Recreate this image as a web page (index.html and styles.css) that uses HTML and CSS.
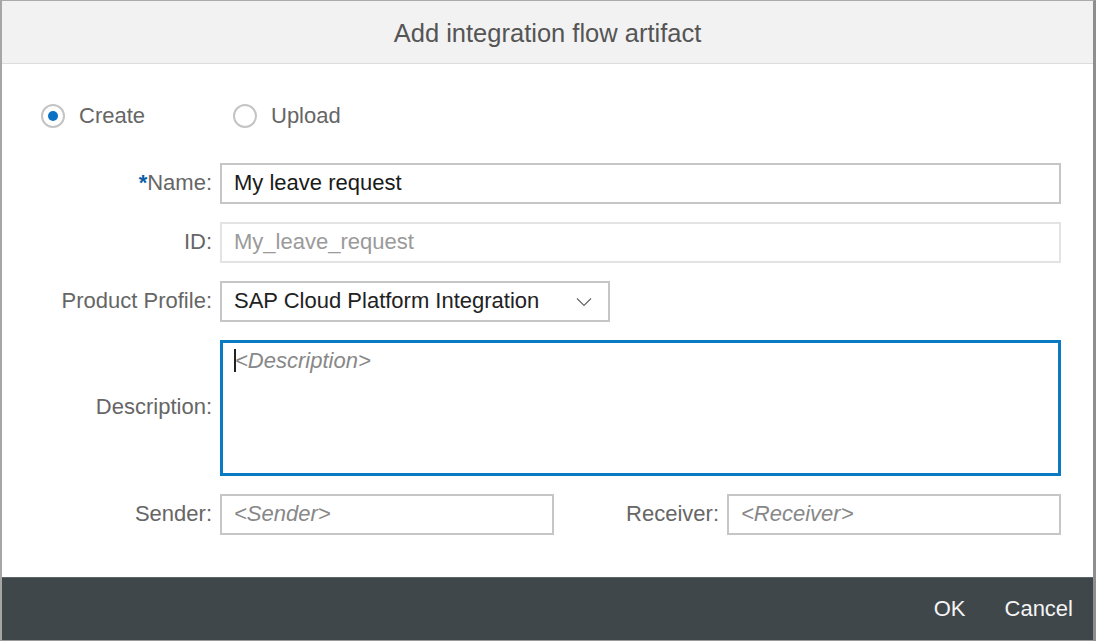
FILE: index.html
```html
<!DOCTYPE html>
<html lang="en">
<head>
<meta charset="utf-8">
<title>Add integration flow artifact</title>
<link rel="stylesheet" href="styles.css">
</head>
<body>
<div class="dialog">
  <header class="dialog-header">
    <h1 class="dialog-title">Add integration flow artifact</h1>
  </header>
  <main class="dialog-body">
    <div class="radio-row">
      <label class="radio">
        <span class="radio-circle checked"><span class="radio-dot"></span></span>
        <span class="radio-text">Create</span>
      </label>
      <label class="radio">
        <span class="radio-circle"></span>
        <span class="radio-text">Upload</span>
      </label>
    </div>
    <div class="form">
      <label class="form-label"><span class="req">*</span>Name:</label>
      <div class="field">My leave request</div>

      <label class="form-label">ID:</label>
      <div class="field field-disabled">My_leave_request</div>

      <label class="form-label">Product Profile:</label>
      <div class="field field-select">
        <span>SAP Cloud Platform Integration</span>
        <svg class="chevron" width="16" height="10" viewBox="0 0 16 10"><path d="M1 1.5 L8 8.5 L15 1.5" fill="none" stroke="#666" stroke-width="1.2"/></svg>
      </div>

      <label class="form-label">Description:</label>
      <div class="field field-area"><span class="caret"></span><span class="placeholder">&lt;Description&gt;</span></div>

      <label class="form-label">Sender:</label>
      <div class="pair">
        <div class="field"><span class="placeholder">&lt;Sender&gt;</span></div>
        <label class="form-label pair-label">Receiver:</label>
        <div class="field"><span class="placeholder">&lt;Receiver&gt;</span></div>
      </div>
    </div>
  </main>
  <footer class="dialog-footer">
    <button class="footer-btn">OK</button>
    <button class="footer-btn">Cancel</button>
  </footer>
</div>
</body>
</html>
```
FILE: styles.css
```css
* { box-sizing: border-box; }
html, body { margin: 0; padding: 0; }
body {
  font-family: "Liberation Sans", Arial, sans-serif;
  font-size: 22px;
  background: #fff;
}
.dialog {
  width: 1096px;
  height: 641px;
  display: flex;
  flex-direction: column;
  border-left: 2px solid #a6a6a6;
  border-top: 1px solid #aaaaaa;
  border-right: 3px solid #8e8e8e;
  border-bottom: 1px solid #9a9a9a;
  background: #fff;
}
.dialog-header {
  height: 63px;
  background: #f2f2f2;
  border-bottom: 1px solid #dcdcdc;
  display: flex;
  align-items: center;
  justify-content: center;
}
.dialog-title {
  margin: 0;
  font-weight: normal;
  font-size: 25.5px;
  color: #555;
  padding-top: 2px;
}
.dialog-body {
  flex: 1;
  padding: 40px 32px 0 0;
}
.radio-row {
  display: flex;
  align-items: center;
  height: 24px;
  padding-left: 39px;
}
.radio {
  display: flex;
  align-items: center;
  width: 192px;
}
.radio-circle {
  width: 24px;
  height: 24px;
  border-radius: 50%;
  border: 2px solid #c4c4c4;
  display: flex;
  align-items: center;
  justify-content: center;
  flex: none;
}
.radio-dot {
  width: 10px;
  height: 10px;
  border-radius: 50%;
  background: #0a72c4;
}
.radio-text {
  margin-left: 14px;
  color: #666;
}
.form {
  margin-top: 35px;
  display: grid;
  grid-template-columns: 210px 1fr;
  column-gap: 8px;
  row-gap: 18px;
  align-items: center;
}
.form-label {
  text-align: right;
  color: #666;
  white-space: nowrap;
  padding-bottom: 2px;
}
.req { color: #0b5ea8; font-weight: bold; }
.field {
  height: 41px;
  border: 2px solid #c6c6c6;
  padding: 0 12px 2px;
  display: flex;
  align-items: center;
  color: #1a1a1a;
  background: #fff;
}
.field-disabled {
  border-color: #e3e3e3;
  color: #9a9a9a;
}
.field-select {
  width: 390px;
  justify-content: space-between;
  padding-right: 16px;
  color: #222;
}
.chevron { margin-top: 2px; }
.field-area {
  height: 136px;
  border: 3px solid #0a7bc2;
  align-items: flex-start;
  padding: 5px 12px 0 11px;
}
.caret {
  width: 2px;
  height: 23px;
  background: #222;
  margin-top: 1px;
}
.placeholder {
  font-style: italic;
  color: #888;
}
.field-area .placeholder { margin-left: -1px; }
.pair {
  display: grid;
  grid-template-columns: 1fr 173px 1fr;
  align-items: center;
}
.pair-label { padding-right: 8px; }
.dialog-footer {
  height: 63px;
  background: #3f474b;
  border-top: 1px solid #5c6468;
  display: flex;
  align-items: center;
  justify-content: flex-end;
  gap: 39px;
  padding-right: 20px;
}
.footer-btn {
  background: none;
  border: none;
  padding: 0;
  font-family: inherit;
  font-size: 22px;
  color: #f4f4f4;
  cursor: pointer;
}
```
